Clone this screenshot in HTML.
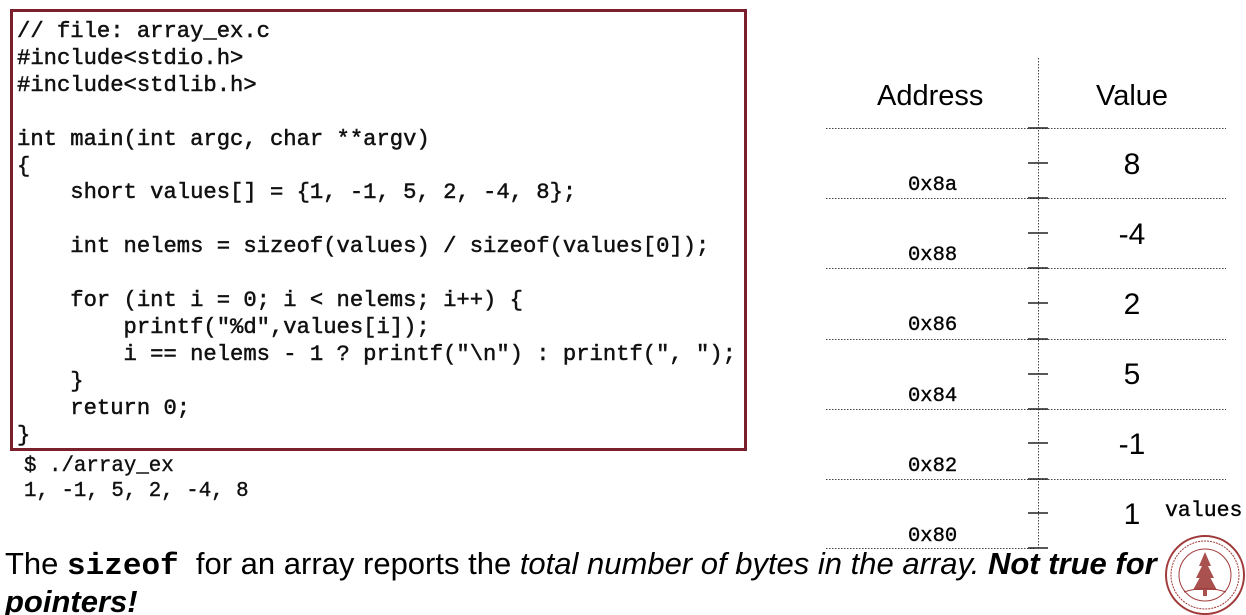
<!DOCTYPE html>
<html><head><meta charset="utf-8"><style>
html,body{margin:0;padding:0;background:#fff;width:1246px;height:615px;overflow:hidden;position:relative;font-family:"Liberation Sans",sans-serif;}
.box{position:absolute;left:10px;top:9px;width:731px;height:436px;border:3px solid #7a1f2b;}
pre{margin:0;font-family:"Liberation Mono",monospace;font-weight:normal;color:#111;}
.code{position:absolute;left:17px;top:19px;font-size:22.2px;line-height:26.9px;-webkit-text-stroke:0.5px #111;}
.out{position:absolute;left:24px;top:454px;font-size:20.8px;line-height:25px;-webkit-text-stroke:0.4px #111;}
.a{position:absolute;font-family:"Liberation Mono",monospace;font-size:20.5px;left:908px;-webkit-text-stroke:0.4px #111;}
.v{position:absolute;font-size:30px;width:80px;text-align:center;left:1092px;}
.h{position:absolute;font-size:29px;top:80px;}
.bt{position:absolute;left:5px;font-size:31px;color:#000;white-space:nowrap;}
</style></head><body>
<div class="box"></div>
<pre class="code">// file: array_ex.c
#include&lt;stdio.h&gt;
#include&lt;stdlib.h&gt;

int main(int argc, char **argv)
{
    short values[] = {1, -1, 5, 2, -4, 8};

    int nelems = sizeof(values) / sizeof(values[0]);

    for (int i = 0; i &lt; nelems; i++) {
        printf("%d",values[i]);
        i == nelems - 1 ? printf("\n") : printf(", ");
    }
    return 0;
}</pre>
<pre class="out">$ ./array_ex
1, -1, 5, 2, -4, 8</pre>
<svg style="position:absolute;left:0;top:0" width="1246" height="615">
<g stroke="#444" stroke-width="1" stroke-dasharray="1.5,1.5">
<line x1="1038.5" y1="58" x2="1038.5" y2="550"/>
<line x1="826" y1="128.5" x2="1226" y2="128.5"/>
<line x1="826" y1="198.5" x2="1226" y2="198.5"/>
<line x1="826" y1="268.5" x2="1226" y2="268.5"/>
<line x1="826" y1="339.5" x2="1226" y2="339.5"/>
<line x1="826" y1="409.5" x2="1226" y2="409.5"/>
<line x1="826" y1="479.5" x2="1226" y2="479.5"/>
<line x1="826" y1="548.5" x2="1036" y2="548.5"/>
</g>
<g stroke="#222" stroke-width="1.5">
<line x1="1028" y1="128" x2="1048" y2="128"/><line x1="1028" y1="163" x2="1048" y2="163"/>
<line x1="1028" y1="198" x2="1048" y2="198"/><line x1="1028" y1="233" x2="1048" y2="233"/>
<line x1="1028" y1="268" x2="1048" y2="268"/><line x1="1028" y1="303" x2="1048" y2="303"/>
<line x1="1028" y1="339" x2="1048" y2="339"/><line x1="1028" y1="374" x2="1048" y2="374"/>
<line x1="1028" y1="409" x2="1048" y2="409"/><line x1="1028" y1="443" x2="1048" y2="443"/>
<line x1="1028" y1="479" x2="1048" y2="479"/><line x1="1028" y1="513" x2="1048" y2="513"/>
<line x1="1028" y1="548" x2="1048" y2="548"/>
</g>
<g>
<circle cx="1205" cy="575" r="39" fill="#fff" stroke="#a03a3a" stroke-width="2"/>
<circle cx="1205" cy="575" r="34" fill="none" stroke="#a03a3a" stroke-width="1" stroke-dasharray="2,1"/>
<circle cx="1205" cy="575" r="26" fill="none" stroke="#a03a3a" stroke-width="1"/>
<path d="M1205 552 L1199 566 L1211 566 Z M1205 560 L1196 578 L1214 578 Z M1205 568 L1193 590 L1217 590 Z" fill="#a8514f"/>
<rect x="1203" y="586" width="4" height="10" fill="#a8514f"/>
<path d="M1184 592 Q1205 585 1226 592" stroke="#a03a3a" fill="none"/>
</g>
</svg>
<div class="h" style="left:877px">Address</div>
<div class="h" style="left:1096px">Value</div>
<div class="a" style="top:174px">0x8a</div>
<div class="a" style="top:244px">0x88</div>
<div class="a" style="top:314px">0x86</div>
<div class="a" style="top:385px">0x84</div>
<div class="a" style="top:455px">0x82</div>
<div class="a" style="top:525px">0x80</div>
<div class="v" style="top:148px">8</div>
<div class="v" style="top:218px">-4</div>
<div class="v" style="top:288px">2</div>
<div class="v" style="top:358px">5</div>
<div class="v" style="top:428px">-1</div>
<div class="v" style="top:498px">1</div>
<div class="a" style="left:1165px;top:499px;font-size:21.5px">values</div>
<div class="bt" style="top:546px">The <span style="font-family:'Liberation Mono',monospace;font-weight:bold;font-size:31px">sizeof</span>&nbsp; for an array reports the <i>total number of bytes in the array.</i> <b><i>Not true for</i></b></div>
<div class="bt" style="top:584px"><b><i>pointers!</i></b></div>
</body></html>
